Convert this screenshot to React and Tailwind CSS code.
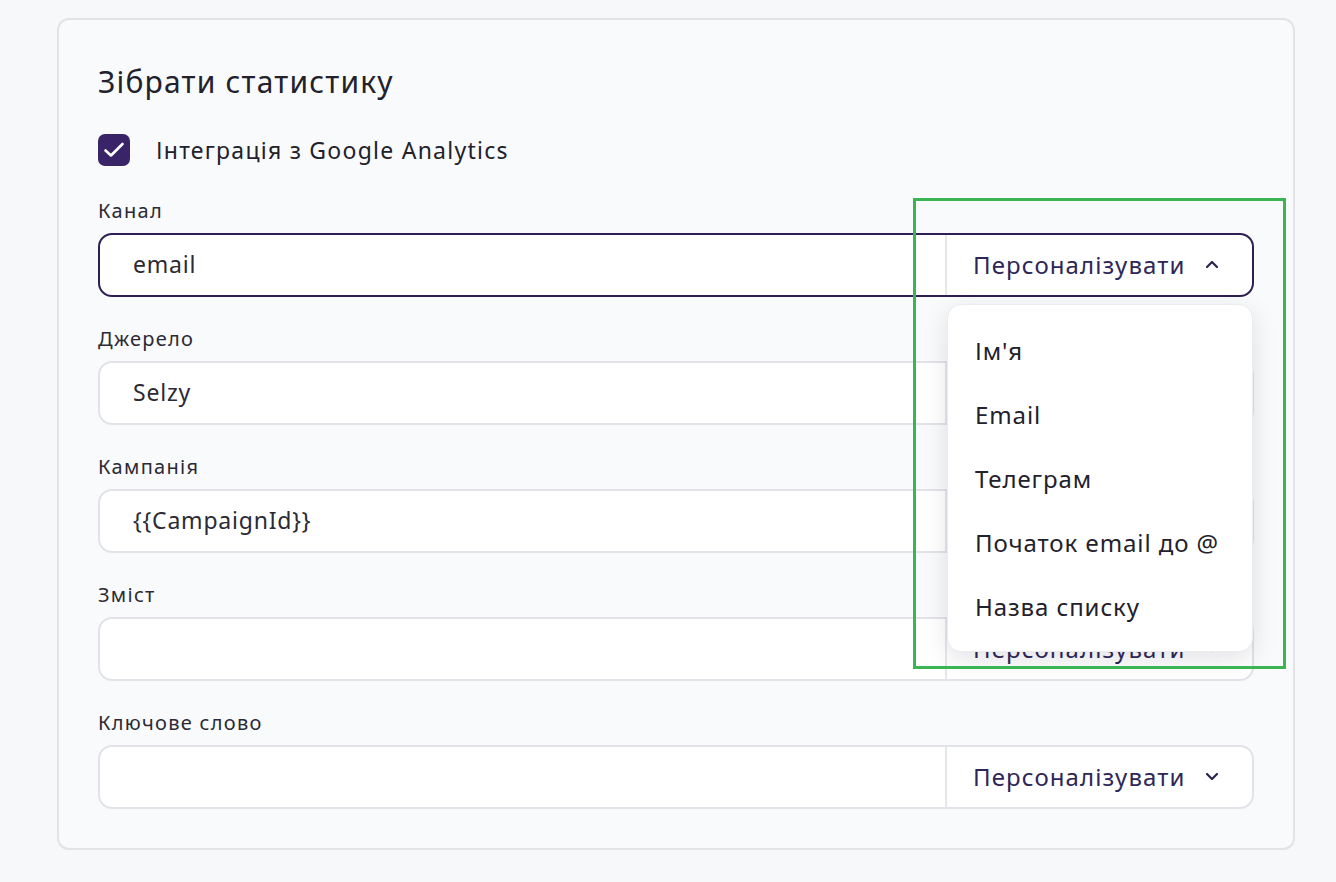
import React from "react";

const font = { fontFamily: '"Noto Sans", "Open Sans", sans-serif' };

function Chevron({ up }) {
  return (
    <svg width="14" height="9" viewBox="0 0 14 9" fill="none" className="ml-[19px]">
      {up ? (
        <path d="M2 7 L7 2 L12 7" stroke="#2e2350" strokeWidth="2.2" strokeLinecap="round" strokeLinejoin="round" />
      ) : (
        <path d="M2 2 L7 7 L12 2" stroke="#2e2350" strokeWidth="2.2" strokeLinecap="round" strokeLinejoin="round" />
      )}
    </svg>
  );
}

function Field({ label, value, active, children, last }) {
  return (
    <div className={`relative ${last ? "" : "mb-[30px]"}`}>
      <div className="text-[20px] leading-[24px] tracking-[1.3px] text-[#2b2a35] mb-[10px]">{label}</div>
      <div
        className={`flex h-[64px] rounded-[14px] bg-white ${
          active ? "border-2 border-[#2e1f52]" : "border-2 border-[#e2e3e8]"
        }`}
      >
        <div className="flex-1 flex items-center pl-[33px] text-[23px] tracking-[0.8px] text-[#2b2a35]">{value}</div>
        <div className="w-[307px] border-l-2 border-[#e6e7eb] flex items-center pl-[26px] text-[24px] tracking-[1.1px] text-[#2e2657]">
          Персоналізувати
          <Chevron up={active} />
        </div>
      </div>
      {children}
    </div>
  );
}

export default function App() {
  const items = ["Ім'я", "Email", "Телеграм", "Початок email до @", "Назва списку"];
  return (
    <div className="min-h-[882px] w-[1336px] bg-[#f7f8fa] pt-[18px] pl-[57px]" style={font}>
      <div className="relative w-[1238px] h-[832px] rounded-[12px] border-2 border-[#e2e3e7] bg-[#f9fafb] pt-[44px] px-[39px]">
        <div className="text-[30px] leading-[36px] tracking-[1.2px] text-[#22212c]">Зібрати статистику</div>
        <div className="flex items-center mt-[33px] mb-[31px]">
          <div className="w-[32px] h-[32px] rounded-[7px] bg-[#3a2468] flex items-center justify-center">
            <svg width="22" height="18" viewBox="0 0 22 18" fill="none">
              <path d="M2.5 9.5 L8 14.5 L19.5 3" stroke="white" strokeWidth="2.6" strokeLinecap="round" strokeLinejoin="round" />
            </svg>
          </div>
          <div className="ml-[26px] text-[23px] tracking-[1.25px] text-[#22212c]">Інтеграція з Google Analytics</div>
        </div>

        <Field label="Канал" value="email" active>
          <div className="absolute right-[1px] top-[105px] w-[306px] z-10 rounded-[14px] bg-white border border-[#ececf0] shadow-[0_8px_24px_rgba(30,30,60,0.12)] pt-[14px] pb-[12px]">
            {items.map((it) => (
              <div key={it} className="h-[64px] flex items-center pl-[27px] text-[24px] tracking-[0.9px] text-[#22212c]">
                {it}
              </div>
            ))}
          </div>
        </Field>
        <Field label="Джерело" value="Selzy" />
        <Field label="Кампанія" value="{{CampaignId}}" />
        <Field label="Зміст" value="" />
        <Field label="Ключове слово" value="" last />

        <div className="absolute left-[854px] top-[178px] w-[373px] h-[471px] border-[3px] border-[#3bb552] z-20 pointer-events-none" />
      </div>
    </div>
  );
}
